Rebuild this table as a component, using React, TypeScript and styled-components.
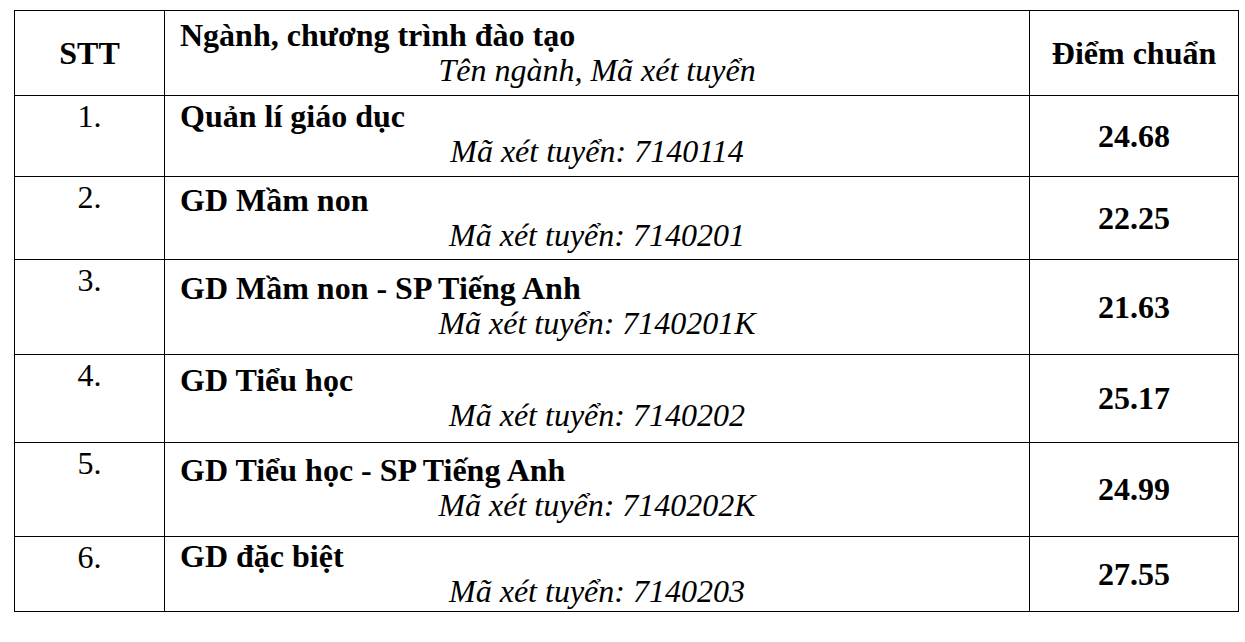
import styled, { createGlobalStyle } from 'styled-components';

const GlobalStyle = createGlobalStyle`
    html, body {
        margin: 0;
        padding: 0;
        background: #fff;
    }
    body {
        font-family: "Liberation Serif", "Times New Roman", serif;
        color: #000;
    }
`;

const Page = styled.div`
    padding: 10px 0 0 14px;
`;

const Table = styled.table`
    width: 1224px;
    table-layout: fixed;
    border-collapse: collapse;
    font-size: 32px;
    line-height: 35px;
`;

const Cell = styled.td<{ $h: number }>`
    height: ${p => p.$h}px;
    border: 1px solid #000;
    padding: 0;
    box-sizing: border-box;
`;

const HeadCell = styled(Cell)`
    text-align: center;
    vertical-align: middle;
    font-weight: bold;
`;

const HeadNameCell = styled(Cell)`
    vertical-align: middle;
    padding-left: 15px;
`;

const NumberCell = styled(Cell)`
    text-align: center;
    vertical-align: top;
    padding-top: 3px;
`;

const NameCell = styled(Cell)<{ $top: number }>`
    vertical-align: top;
    padding: ${p => p.$top}px 0 0 15px;
`;

const ScoreCell = styled(Cell)`
    text-align: center;
    vertical-align: middle;
    font-weight: bold;
`;

const Name = styled.div`
    font-weight: bold;
`;

const Code = styled.div`
    font-style: italic;
    text-align: center;
    padding-right: 15px;
    margin-top: 0;
`;

const rows = [
    { no: '1.', name: 'Quản lí giáo dục', code: '7140114', score: '24.68', h: 81, top: 3 },
    { no: '2.', name: 'GD Mầm non', code: '7140201', score: '22.25', h: 83, top: 6 },
    { no: '3.', name: 'GD Mầm non - SP Tiếng Anh', code: '7140201K', score: '21.63', h: 95, top: 11 },
    { no: '4.', name: 'GD Tiểu học', code: '7140202', score: '25.17', h: 88, top: 8 },
    { no: '5.', name: 'GD Tiểu học - SP Tiếng Anh', code: '7140202K', score: '24.99', h: 94, top: 10 },
    { no: '6.', name: 'GD đặc biệt', code: '7140203', score: '27.55', h: 75, top: 2 },
];

export default function App() {
    return (
        <>
            <GlobalStyle />
            <Page>
                <Table>
                    <colgroup>
                        <col style={{ width: 150 }} />
                        <col style={{ width: 865 }} />
                        <col style={{ width: 209 }} />
                    </colgroup>
                    <thead>
                        <tr>
                            <HeadCell $h={85}>STT</HeadCell>
                            <HeadNameCell $h={85}>
                                <Name>Ngành, chương trình đào tạo</Name>
                                <Code>Tên ngành, Mã xét tuyển</Code>
                            </HeadNameCell>
                            <HeadCell $h={85}>Điểm chuẩn</HeadCell>
                        </tr>
                    </thead>
                    <tbody>
                        {rows.map(r => (
                            <tr key={r.no}>
                                <NumberCell $h={r.h}>{r.no}</NumberCell>
                                <NameCell $h={r.h} $top={r.top}>
                                    <Name>{r.name}</Name>
                                    <Code>Mã xét tuyển: {r.code}</Code>
                                </NameCell>
                                <ScoreCell $h={r.h}>{r.score}</ScoreCell>
                            </tr>
                        ))}
                    </tbody>
                </Table>
            </Page>
        </>
    );
}
